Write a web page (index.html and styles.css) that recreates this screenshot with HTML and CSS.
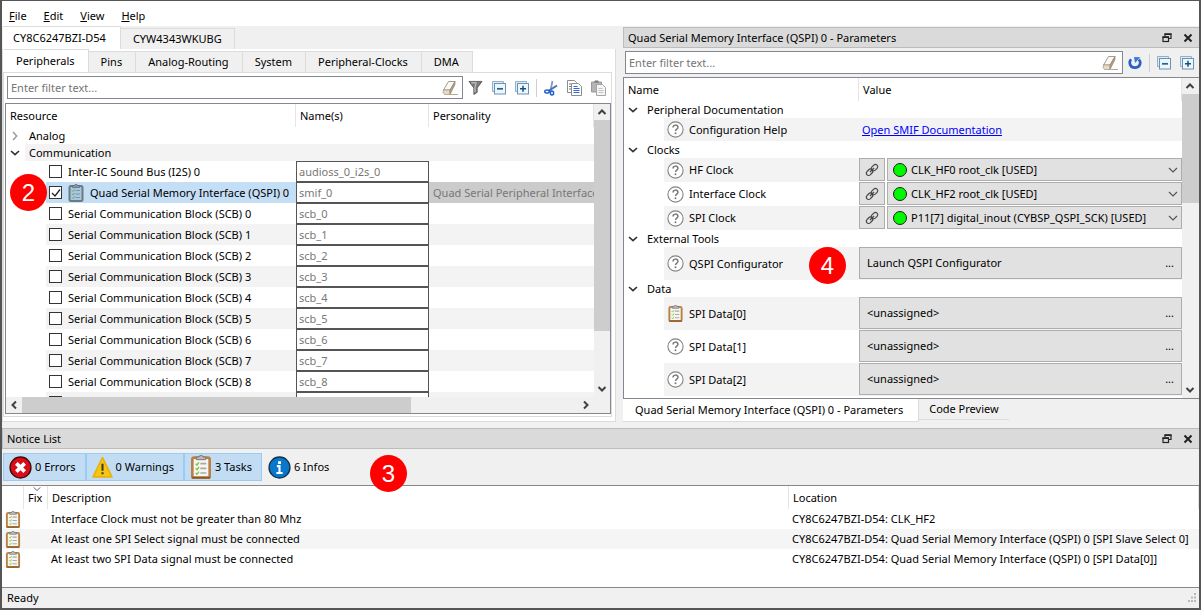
FILE: index.html
```html
<!DOCTYPE html>
<html lang="en">
<head>
<meta charset="utf-8">
<title>Device Configurator</title>
<link rel="stylesheet" href="styles.css">
</head>
<body>
<svg class="defs" width="0" height="0" aria-hidden="true">
  <symbol id="clip" viewBox="0 0 16 18">
    <rect x="1.5" y="2" width="13" height="15" rx="1.5" fill="#f7f5ef" stroke="#b98045" stroke-width="2"/>
    <path d="M1 17h14" stroke="#8a5526" stroke-width="1.2"/>
    <path d="M4.5 3.5V1.5h2L7 .5h2l.5 1h2v2z" fill="#b9bbbd" stroke="#76726c" stroke-width=".7"/>
    <path d="M7.5 6.5h4.5M7.5 10h4.5M7.5 13.5h4.5" stroke="#a9a9a9" stroke-width="1.2"/>
    <path d="M4 6.5l1 1 1.5-2M4 10l1 1 1.5-2M4 13.5l1 1 1.5-2" fill="none" stroke="#7cc344" stroke-width="1"/>
  </symbol>
  <symbol id="clip-sel" viewBox="0 0 16 18">
    <rect x="1.5" y="2" width="13" height="15" rx="1.5" fill="#a9c6da" stroke="#6c7a84" stroke-width="2"/>
    <path d="M4.5 3.5V1.5h2L7 .5h2l.5 1h2v2z" fill="#8496a3" stroke="#5c6a74" stroke-width=".7"/>
    <path d="M7.5 6.5h4.5M7.5 10h4.5M7.5 13.5h4.5" stroke="#7898ae" stroke-width="1.2"/>
    <path d="M4 6.5l1 1 1.5-2M4 10l1 1 1.5-2M4 13.5l1 1 1.5-2" fill="none" stroke="#5fa888" stroke-width="1"/>
  </symbol>
  <symbol id="help" viewBox="0 0 17 17">
    <circle cx="8.5" cy="8.5" r="7.6" fill="#fff" stroke="#858585" stroke-width="1.1"/>
    <path d="M6 6.6c.1-3.3 5-3.2 5-.3 0 1.800-2.500 1.700-2.500 3.700" fill="none" stroke="#7a7a7a" stroke-width="1.500"/>
    <circle cx="8.5" cy="12.3" r="1" fill="#7a7a7a"/>
  </symbol>
  <symbol id="down" viewBox="0 0 10 10"><path d="M1 3l4 3.700L9 3" fill="none" stroke="#333" stroke-width="1.700"/></symbol>
  <symbol id="thin-down" viewBox="0 0 10 10"><path d="M1 3l4 4 4-4" fill="none" stroke="#555" stroke-width="1.200"/></symbol>
  <symbol id="right" viewBox="0 0 10 10"><path d="M3 1l3.700 4L3 9" fill="none" stroke="#9a9a9a" stroke-width="1.500"/></symbol>
  <symbol id="sb-up" viewBox="0 0 10 10"><path d="M1.500 7L5 3.500 8.500 7" fill="none" stroke="#404040" stroke-width="2"/></symbol>
  <symbol id="sb-down" viewBox="0 0 10 10"><path d="M1.500 3L5 6.500 8.500 3" fill="none" stroke="#404040" stroke-width="2"/></symbol>
  <symbol id="sb-left" viewBox="0 0 10 10"><path d="M7 1.500L3.500 5 7 8.500" fill="none" stroke="#404040" stroke-width="2"/></symbol>
  <symbol id="sb-right" viewBox="0 0 10 10"><path d="M3 1.500L6.500 5 3 8.500" fill="none" stroke="#404040" stroke-width="2"/></symbol>
  <symbol id="eraser" viewBox="0 0 16 16">
    <path d="M6.500 1.500h6.500L8 10H1.500z" fill="#fbf9f5" stroke="#9a8f80" stroke-width=".9"/>
    <path d="M1.500 10H8v4.500H2.500L1 12.500z" fill="#e6dacb" stroke="#a39480" stroke-width=".7"/>
    <path d="M13 1.500v3L8 14.500V10z" fill="#b09d86" stroke="#998871" stroke-width=".7"/>
    <path d="M8.500 14.500H16" stroke="#b8a890"/>
  </symbol>
  <symbol id="funnel" viewBox="0 0 16 16">
    <path d="M1 1.500h14L9.800 8.500v4.700L6.200 15.500v-7z" fill="#7b7b7b" stroke="#4c4c4c" stroke-width=".8"/>
    <path d="M3.500 3h5L7.500 8v5" fill="none" stroke="#b7b7b7" stroke-width="1.500"/>
  </symbol>
  <symbol id="minus" viewBox="0 0 14 14">
    <path d="M.5 10.500V.5h11v2h-9v8z" fill="#dcebf6" stroke="#86a9c6" stroke-width=".9"/>
    <rect x="2.500" y="2.500" width="11" height="10.500" fill="#eef6fb" stroke="#6c93b4"/>
    <path d="M5 7.800h6" stroke="#1f6595" stroke-width="1.700"/>
  </symbol>
  <symbol id="plus" viewBox="0 0 14 14">
    <path d="M.5 10.500V.5h11v2h-9v8z" fill="#dcebf6" stroke="#86a9c6" stroke-width=".9"/>
    <rect x="2.500" y="2.500" width="11" height="10.500" fill="#eef6fb" stroke="#6c93b4"/>
    <path d="M5 7.800h6M8 4.800v6" stroke="#0c5488" stroke-width="1.500"/>
  </symbol>
  <symbol id="cut" viewBox="0 0 14 16">
    <path d="M8.500 1L6.500 10.500" stroke="#7f9ac2" stroke-width="1.800"/>
    <path d="M13 5.500L4.500 11" stroke="#4a6ca8" stroke-width="1.800"/>
    <ellipse cx="3" cy="11.500" rx="2.300" ry="1.600" fill="none" stroke="#1f5fc9" stroke-width="1.500"/>
    <ellipse cx="8" cy="13" rx="1.600" ry="2" fill="none" stroke="#1f5fc9" stroke-width="1.500"/>
  </symbol>
  <symbol id="copy" viewBox="0 0 15 16">
    <path d="M.5.500h7l2 2v10h-9z" fill="#fff" stroke="#8d8d8d"/>
    <path d="M2 4h2M2 6.500h2M2 9h2" stroke="#777"/>
    <path d="M4.500 3.500h7l3 3v9h-10z" fill="#fff" stroke="#8d8d8d"/>
    <path d="M6.500 6.500h4M6.500 8.500h6M6.500 10.500h6M6.500 12.500h6" stroke="#2f66dc" stroke-width="1.200"/>
  </symbol>
  <symbol id="paste" viewBox="0 0 15 16">
    <path d="M.5 2h10v10H.5z" fill="#b4b4b4" stroke="#9a9a9a"/>
    <path d="M3 2.500L4 .5h3l1 2z" fill="#777"/>
    <path d="M5.500 4.500h6l3 3v8h-9z" fill="#f5f5f5" stroke="#a5a5a5"/>
    <path d="M7.500 8.500h4M7.500 10.500h5M7.500 12.500h5" stroke="#c4c4c4"/>
  </symbol>
  <symbol id="reset" viewBox="0 0 14 14">
    <path d="M3 3.200C.5 6.500 2 11.700 7 11.700s6.500-5 4-8.200" fill="none" stroke="#2a5fc6" stroke-width="2.700"/>
    <path d="M6 1l6.500.2L7 7z" fill="#3f78d8"/>
  </symbol>
  <symbol id="link" viewBox="0 0 14 14">
    <g fill="none" stroke="#444" stroke-width="1.200">
      <rect x="6" y="2.300" width="7" height="4.600" rx="2.200" transform="rotate(-45 9.500 4.600)"/>
      <rect x="1" y="7" width="7" height="4.600" rx="2.200" transform="rotate(-45 4.500 9.300)"/>
      <path d="M5 9l4-4"/>
    </g>
  </symbol>
  <symbol id="float" viewBox="0 0 10 10">
    <path d="M3 3V1h6v4.500H7" fill="none" stroke="#222" stroke-width="1.200"/><path d="M2.500 1.200h7" stroke="#222" stroke-width="1.600"/>
    <rect x="1" y="4" width="5.500" height="4.500" fill="none" stroke="#222" stroke-width="1.200"/><path d="M.5 4.200h6.500" stroke="#222" stroke-width="1.600"/>
  </symbol>
  <symbol id="close" viewBox="0 0 10 10"><path d="M1.500 1.500l7 7M8.500 1.500l-7 7" stroke="#222" stroke-width="2"/></symbol>
  <symbol id="error" viewBox="0 0 22 22">
    <circle cx="11" cy="11" r="10" fill="#db0c16" stroke="#3c0d10" stroke-width="1.300"/>
    <path d="M7 7l8 8M15 7l-8 8" stroke="#fff" stroke-width="3.600"/>
  </symbol>
  <symbol id="warn" viewBox="0 0 20 21">
    <path d="M10 1.500L19 20H1z" fill="#f8c512" stroke="#e8b20a" stroke-width="1.600" stroke-linejoin="round"/>
    <path d="M10 7.500v6.500M10 15.500v2" stroke="#3b3b2a" stroke-width="2"/>
  </symbol>
  <symbol id="info" viewBox="0 0 22 22">
    <circle cx="11" cy="11" r="10" fill="#0878cc" stroke="#15324c" stroke-width="1.300"/>
    <path d="M11 5v2.600" stroke="#fff" stroke-width="2.800"/>
    <path d="M8.500 9.700H11v6M8 16.200h6" fill="none" stroke="#fff" stroke-width="2"/>
  </symbol>
  <symbol id="check" viewBox="0 0 10 10"><path d="M1 5l3 3 5-6.500" fill="none" stroke="#222" stroke-width="1.300"/></symbol>
</svg>

<div class="window">
  <nav class="menubar">
    <button><u>F</u>ile</button><button><u>E</u>dit</button><button><u>V</u>iew</button><button><u>H</u>elp</button>
  </nav>

  <main class="work">
    <section class="device">
      <div class="tabs device-tabs">
        <button class="tab active">CY8C6247BZI-D54</button><button class="tab">CYW4343WKUBG</button>
      </div>
      <div class="device-pane">
        <div class="tabs inner-tabs">
          <button class="tab active">Peripherals</button><button class="tab">Pins</button><button class="tab">Analog-Routing</button><button class="tab">System</button><button class="tab">Peripheral-Clocks</button><button class="tab">DMA</button>
        </div>
        <div class="inner-pane">
          <div class="filter">
            <label class="filter-box"><input type="text" aria-label="Filter resources" placeholder="Enter filter text..."><svg width="16" height="16"><use href="#eraser"/></svg></label>
            <div class="tools">
              <button aria-label="Filter"><svg width="15" height="15"><use href="#funnel"/></svg></button>
              <button aria-label="Collapse all"><svg width="14" height="14"><use href="#minus"/></svg></button>
              <button aria-label="Expand all"><svg width="14" height="14"><use href="#plus"/></svg></button>
              <span class="sep"></span>
              <button aria-label="Cut"><svg width="14" height="16"><use href="#cut"/></svg></button>
              <button aria-label="Copy"><svg width="15" height="16"><use href="#copy"/></svg></button>
              <button aria-label="Paste"><svg width="15" height="16"><use href="#paste"/></svg></button>
            </div>
          </div>
          <div class="frame">
            <div class="view">
              <table class="resources">
                <colgroup><col class="c-resource"><col class="c-name"><col></colgroup>
                <thead><tr><th>Resource</th><th>Name(s)</th><th>Personality</th></tr></thead>
                <tbody>
                  <tr class="group"><td colspan="3"><div class="branch"><svg width="10" height="10"><use href="#right"/></svg><span>Analog</span></div></td></tr>
                  <tr class="group striped"><td colspan="3"><div class="branch"><svg width="10" height="10"><use href="#down"/></svg><span>Communication</span></div></td></tr>
                  <tr><td><label class="item"><input type="checkbox"><span>Inter-IC Sound Bus (I2S) 0</span></label></td><td><input class="name" aria-label="Name" value="audioss_0_i2s_0"></td><td></td></tr>
                  <tr class="selected"><td><label class="item"><input type="checkbox" checked><svg class="tick" width="10" height="10"><use href="#check"/></svg><svg class="task" width="16" height="18"><use href="#clip-sel"/></svg><span>Quad Serial Memory Interface (QSPI) 0</span></label><span class="mark mark-2">2</span></td><td><input class="name" aria-label="Name" value="smif_0"></td><td>Quad Serial Peripheral Interface</td></tr>
                  <tr><td><label class="item"><input type="checkbox"><span>Serial Communication Block (SCB) 0</span></label></td><td><input class="name" aria-label="Name" value="scb_0"></td><td></td></tr>
                  <tr class="striped"><td><label class="item"><input type="checkbox"><span>Serial Communication Block (SCB) 1</span></label></td><td><input class="name" aria-label="Name" value="scb_1"></td><td></td></tr>
                  <tr><td><label class="item"><input type="checkbox"><span>Serial Communication Block (SCB) 2</span></label></td><td><input class="name" aria-label="Name" value="scb_2"></td><td></td></tr>
                  <tr class="striped"><td><label class="item"><input type="checkbox"><span>Serial Communication Block (SCB) 3</span></label></td><td><input class="name" aria-label="Name" value="scb_3"></td><td></td></tr>
                  <tr><td><label class="item"><input type="checkbox"><span>Serial Communication Block (SCB) 4</span></label></td><td><input class="name" aria-label="Name" value="scb_4"></td><td></td></tr>
                  <tr class="striped"><td><label class="item"><input type="checkbox"><span>Serial Communication Block (SCB) 5</span></label></td><td><input class="name" aria-label="Name" value="scb_5"></td><td></td></tr>
                  <tr><td><label class="item"><input type="checkbox"><span>Serial Communication Block (SCB) 6</span></label></td><td><input class="name" aria-label="Name" value="scb_6"></td><td></td></tr>
                  <tr class="striped"><td><label class="item"><input type="checkbox"><span>Serial Communication Block (SCB) 7</span></label></td><td><input class="name" aria-label="Name" value="scb_7"></td><td></td></tr>
                  <tr><td><label class="item"><input type="checkbox"><span>Serial Communication Block (SCB) 8</span></label></td><td><input class="name" aria-label="Name" value="scb_8"></td><td></td></tr>
                  <tr class="striped"><td><label class="item"><input type="checkbox" aria-label="Next block"></label></td><td><input class="name" aria-label="Name"></td><td></td></tr>
                </tbody>
              </table>
            </div>
            <div class="vbar"><button aria-label="Scroll up"><svg width="10" height="10"><use href="#sb-up"/></svg></button><div class="track"><div class="thumb thumb-resources"></div></div><button aria-label="Scroll down"><svg width="10" height="10"><use href="#sb-down"/></svg></button></div>
            <div class="hbar"><button aria-label="Scroll left"><svg width="10" height="10"><use href="#sb-left"/></svg></button><div class="track"><div class="thumb"></div></div><button aria-label="Scroll right"><svg width="10" height="10"><use href="#sb-right"/></svg></button></div>
          </div>
        </div>
      </div>
    </section>

    <section class="params">
      <header class="dock-title"><span>Quad Serial Memory Interface (QSPI) 0 - Parameters</span><button aria-label="Float"><svg width="10" height="10"><use href="#float"/></svg></button><button aria-label="Close"><svg width="10" height="10"><use href="#close"/></svg></button></header>
      <div class="filter">
        <label class="filter-box"><input type="text" aria-label="Filter parameters" placeholder="Enter filter text..."><svg width="16" height="16"><use href="#eraser"/></svg></label>
        <div class="tools">
          <button aria-label="Reset"><svg width="14" height="14"><use href="#reset"/></svg></button>
          <span class="sep"></span>
          <button aria-label="Collapse all"><svg width="14" height="14"><use href="#minus"/></svg></button>
          <button aria-label="Expand all"><svg width="14" height="14"><use href="#plus"/></svg></button>
        </div>
      </div>
      <div class="frame">
        <div class="view">
          <table class="parameters">
            <colgroup><col class="c-param"><col></colgroup>
            <thead><tr><th>Name</th><th>Value</th></tr></thead>
            <tbody>
              <tr class="group"><td colspan="2"><div class="branch"><svg width="10" height="10"><use href="#down"/></svg><span>Peripheral Documentation</span></div></td></tr>
              <tr class="striped doc"><td><div class="param"><svg width="17" height="17"><use href="#help"/></svg>Configuration Help</div></td><td><a href="#smif">Open SMIF Documentation</a></td></tr>
              <tr class="group"><td colspan="2"><div class="branch"><svg width="10" height="10"><use href="#down"/></svg><span>Clocks</span></div></td></tr>
              <tr class="striped"><td><div class="param"><svg width="17" height="17"><use href="#help"/></svg>HF Clock</div></td><td><div class="pick"><button aria-label="Go to HF clock"><svg width="14" height="14"><use href="#link"/></svg></button><div class="combo"><i class="dot"></i><select aria-label="HF Clock"><option>CLK_HF0 root_clk [USED]</option></select><svg width="10" height="10"><use href="#thin-down"/></svg></div></div></td></tr>
              <tr><td><div class="param"><svg width="17" height="17"><use href="#help"/></svg>Interface Clock</div></td><td><div class="pick"><button aria-label="Go to interface clock"><svg width="14" height="14"><use href="#link"/></svg></button><div class="combo"><i class="dot"></i><select aria-label="Interface Clock"><option>CLK_HF2 root_clk [USED]</option></select><svg width="10" height="10"><use href="#thin-down"/></svg></div></div></td></tr>
              <tr class="striped"><td><div class="param"><svg width="17" height="17"><use href="#help"/></svg>SPI Clock</div></td><td><div class="pick"><button aria-label="Go to SPI clock"><svg width="14" height="14"><use href="#link"/></svg></button><div class="combo"><i class="dot"></i><select aria-label="SPI Clock"><option>P11[7] digital_inout (CYBSP_QSPI_SCK) [USED]</option></select><svg width="10" height="10"><use href="#thin-down"/></svg></div></div></td></tr>
              <tr class="group"><td colspan="2"><div class="branch"><svg width="10" height="10"><use href="#down"/></svg><span>External Tools</span></div></td></tr>
              <tr class="striped tall"><td><div class="param"><svg width="17" height="17"><use href="#help"/></svg>QSPI Configurator</div><span class="mark mark-4">4</span></td><td><button class="open"><span>Launch QSPI Configurator</span><span>...</span></button></td></tr>
              <tr class="group"><td colspan="2"><div class="branch"><svg width="10" height="10"><use href="#down"/></svg><span>Data</span></div></td></tr>
              <tr class="striped tall"><td><div class="param"><svg width="17" height="17"><use href="#clip"/></svg>SPI Data[0]</div></td><td><button class="open"><span>&lt;unassigned&gt;</span><span>...</span></button></td></tr>
              <tr class="tall"><td><div class="param"><svg width="17" height="17"><use href="#help"/></svg>SPI Data[1]</div></td><td><button class="open"><span>&lt;unassigned&gt;</span><span>...</span></button></td></tr>
              <tr class="striped tall"><td><div class="param"><svg width="17" height="17"><use href="#help"/></svg>SPI Data[2]</div></td><td><button class="open"><span>&lt;unassigned&gt;</span><span>...</span></button></td></tr>
            </tbody>
          </table>
        </div>
        <div class="vbar"><button aria-label="Scroll up"><svg width="10" height="10"><use href="#sb-up"/></svg></button><div class="track"><div class="thumb thumb-params"></div></div><button aria-label="Scroll down"><svg width="10" height="10"><use href="#sb-down"/></svg></button></div>
      </div>
      <div class="bottom-tabs"><button class="active">Quad Serial Memory Interface (QSPI) 0 - Parameters</button><button>Code Preview</button></div>
    </section>
  </main>

  <section class="notices">
    <header class="dock-title"><span>Notice List</span><button aria-label="Float"><svg width="10" height="10"><use href="#float"/></svg></button><button aria-label="Close"><svg width="10" height="10"><use href="#close"/></svg></button></header>
    <div class="levels">
      <button class="on"><svg width="23" height="23"><use href="#error"/></svg>0 Errors</button>
      <button class="on"><svg width="21" height="22"><use href="#warn"/></svg>0 Warnings</button>
      <button class="on"><svg width="22" height="24"><use href="#clip"/></svg>3 Tasks</button>
      <button><svg width="23" height="23"><use href="#info"/></svg>6 Infos</button>
      <span class="mark mark-3">3</span>
    </div>
    <div class="notice-view">
      <table class="notice-table">
        <colgroup><col class="c-icon"><col class="c-fix"><col class="c-desc"><col></colgroup>
        <thead><tr><th></th><th class="sorted">Fix<svg width="8" height="8"><use href="#thin-down"/></svg></th><th>Description</th><th>Location</th></tr></thead>
        <tbody>
          <tr><td><svg width="16" height="17"><use href="#clip"/></svg></td><td></td><td>Interface Clock must not be greater than 80 Mhz</td><td>CY8C6247BZI-D54: CLK_HF2</td></tr>
          <tr class="striped"><td><svg width="16" height="17"><use href="#clip"/></svg></td><td></td><td>At least one SPI Select signal must be connected</td><td>CY8C6247BZI-D54: Quad Serial Memory Interface (QSPI) 0 [SPI Slave Select 0]</td></tr>
          <tr><td><svg width="16" height="17"><use href="#clip"/></svg></td><td></td><td>At least two SPI Data signal must be connected</td><td>CY8C6247BZI-D54: Quad Serial Memory Interface (QSPI) 0 [SPI Data[0]]</td></tr>
        </tbody>
      </table>
    </div>
  </section>

  <footer class="status"><span>Ready</span><svg width="10" height="10" viewBox="0 0 10 10"><path d="M7 0h2v2H7zM4 3.500h2v2H4zM7 3.500h2v2H7zM1 7h2v2H1zM4 7h2v2H4zM7 7h2v2H7z" fill="#b8b8b8"/></svg></footer>
</div>
</body>
</html>
```
FILE: styles.css
```css
* { box-sizing: border-box; }
body { margin: 0; font-family: "Noto Sans", "Open Sans", sans-serif; font-size: 11px; line-height: 16px; color: #000; }
button, input, select { font: inherit; color: inherit; margin: 0; padding: 0; border: 0; background: none; border-radius: 0; }
svg { display: block; flex: none; }
.defs { position: absolute; }

.window { display: flex; flex-direction: column; height: 100vh; min-height: 500px; background: #f0f0f0; border: solid #555; border-width: 1px 2px 2px; overflow: hidden; }
.menubar { display: flex; gap: 17px; height: 25px; padding: 6px 7px 0; background: #fff; flex: none; }
.menubar button { height: 18px; }

.work { display: grid; grid-template-columns: 614fr 576fr; gap: 7px; flex: 1; min-height: 0; }
.device, .params { display: flex; flex-direction: column; min-width: 0; min-height: 0; }

.tabs { display: flex; align-items: flex-end; flex: none; }
.tab { height: 21px; background: #f0f0f0; border: 1px solid #dcdcdc; border-left: 0; border-bottom: 0; white-space: nowrap; }
.tab.active { background: #fff; height: 23px; }
.device-tabs { height: 23px; padding-left: 1px; }
.device-tabs .tab { padding: 0 12px; }
.device-tabs .active { padding: 0 14px 0 10px; }
.device-pane { display: flex; flex-direction: column; flex: 1; min-height: 0; background: #fff; border: 1px solid #dcdcdc; border-top: 0; padding: 2px 3px 4px 0; margin-bottom: 6px; }
.inner-tabs { height: 21px; padding-left: 1px; }
.inner-tabs .tab { padding: 0 13px 0 12px; }
.inner-pane { display: flex; flex-direction: column; flex: 1; min-height: 0; border: 1px solid #dcdcdc; padding: 3px 0 2px 1px; }

.filter { display: flex; align-items: center; flex: none; }
.filter-box { display: flex; align-items: center; flex: 1; height: 23px; padding: 0 4px 0 3px; background: #fff; border: 1px solid #828790; }
.filter-box input { flex: 1; min-width: 0; outline: 0; }
.filter-box input::placeholder { color: #757575; opacity: 1; }
.device .filter { padding: 0 5px 4px 2px; }
.tools { display: flex; align-items: center; gap: 9px; padding-left: 5px; }
.sep { width: 1px; height: 18px; margin: 0 -2px; background: #cfcfcf; }

.frame { display: grid; grid-template-columns: minmax(0, 1fr) 16px; grid-template-rows: minmax(0, 1fr) auto; flex: 1; min-height: 0; background: #fff; border: 1px solid #828790; }
.view { overflow: hidden; min-height: 0; }
table { width: 100%; border-collapse: separate; border-spacing: 0; table-layout: fixed; }
th { height: 23px; padding: 0 4px; text-align: left; font-weight: 400; border-right: 1px solid #e5e5e5; }
td { padding: 0; white-space: nowrap; }
.branch { display: flex; align-items: center; height: 17px; padding-left: 4px; gap: 5px; }
.branch span { flex: 1; padding-left: 4px; line-height: 17px; }
.striped .branch span { background: #f3f3f3; }

.c-resource { width: 290px; }
.c-name { width: 133px; }
.resources tbody tr:not(.group) td { height: 21px; position: relative; }
.resources td:first-child { padding-left: 40px; }
.resources .group td:first-child, .parameters .group td:first-child { padding-left: 0; }
.resources td:nth-child(3) { padding-left: 4px; overflow: hidden; color: #777; }
.item { display: flex; align-items: center; height: 21px; padding-left: 3px; }
.item input { appearance: none; width: 13px; height: 13px; margin-right: 6px; border: 1px solid #333; background: #fff; flex: none; }
.item .task { margin-right: 6px; }
.tick { position: absolute; left: 45px; top: 6px; }
.striped .item, .resources .striped td:nth-child(3) { background: #f3f3f3; }
.selected .item { background: #c4dff5; }
.resources .selected td:nth-child(3) { background: #cbcbcb; }
.name { display: block; width: 100%; height: 21px; padding: 0 2px; color: #777; background: #fff; border: 1px solid #555; outline: 0; }

.vbar { display: flex; flex-direction: column; background: #f0f0f0; }
.vbar button, .hbar button { display: grid; place-items: center; width: 16px; height: 16px; flex: none; }
.track { flex: 1; min-width: 0; min-height: 0; }
.thumb { background: #cdcdcd; height: 100%; width: 70%; }
.vbar .thumb { width: 100%; }
.vbar .thumb-resources { height: 81%; }
.vbar .thumb-params { height: 38%; }
.hbar { grid-column: 1; display: flex; height: 16px; background: #f0f0f0; }
.device .frame { background: linear-gradient(#f0f0f0, #f0f0f0) right bottom / 16px 16px no-repeat, #fff; }

.dock-title { display: flex; align-items: center; gap: 11px; flex: none; height: 21px; padding: 0 6px 0 4px; background: #dadada; border: 1px solid #bcbcbc; border-right: 0; }
.dock-title span { flex: 1; }
.params .filter { padding: 3px 5px 3px 2px; }
.params .dock-title { margin-top: 1px; }
.params .frame { grid-template-columns: minmax(0, 1fr) 17px; border-right: 0; }
.c-param { width: 235px; }
.parameters td:first-child { padding-left: 40px; position: relative; }
.param { display: flex; align-items: center; height: 24px; gap: 5px; padding-left: 3px; }
.doc .param { height: 23px; }
.tall .param { height: 33px; }
.parameters .striped .param { background: #f3f3f3; }
.parameters .striped td:nth-child(2) { background: #f3f3f3; }
.parameters a { color: #0000ff; padding-left: 3px; }
.pick { display: grid; grid-template-columns: 26px minmax(0, 1fr); gap: 2px; height: 24px; padding-bottom: 1px; background: #fff; }
.pick button, .combo, .open { background: #e1e1e1; border: 1px solid #adadad; }
.pick button { display: grid; place-items: center; }
.combo { display: flex; align-items: center; padding: 0 3px 0 5px; gap: 4px; }
.combo select { appearance: none; flex: 1; min-width: 0; height: 20px; outline: 0; }
.dot { width: 14px; height: 14px; border-radius: 50%; background: #00f800; border: 1px solid #222; flex: none; }
.open { display: flex; justify-content: space-between; align-items: center; width: 100%; height: 32px; padding: 0 7px; }
.tall td:nth-child(2) { padding-bottom: 1px; }

.bottom-tabs { display: flex; align-items: flex-start; flex: none; padding-bottom: 6px; }
.bottom-tabs button { height: 21px; padding: 0 10px; white-space: nowrap; border-bottom: 1px solid #dcdcdc; }
.bottom-tabs .active { height: 23px; padding: 0 15px 0 12px; background: #fff; border-right: 1px solid #dcdcdc; }

.notices { flex: none; }
.levels { display: flex; position: relative; height: 36px; padding: 4px 1px; }
.levels button { display: flex; align-items: center; gap: 3px; padding: 0 9px 0 5px; border: 1px solid transparent; }
.levels .on { background: #c2ddf3; border-color: #99ccf5; }
.notice-view { height: 103px; background: #fff; border: solid #828790; border-width: 1px 0; overflow: hidden; }
.c-icon { width: 22px; }
.c-fix { width: 24px; }
.c-desc { width: 741px; }
.notice-table td { height: 20px; padding-left: 3px; }
.notice-table .striped td { background: #f5f5f5; }
.sorted { position: relative; }
.sorted svg { position: absolute; left: 9px; top: -1px; }
.status { display: flex; align-items: center; justify-content: space-between; height: 20px; padding: 0 2px 0 5px; flex: none; }

.mark { position: absolute; z-index: 2; width: 37px; height: 37px; border-radius: 50%; background: #f00; color: #fff; font: 24px/37px "Liberation Sans", sans-serif; text-align: center; }
.mark-2 { left: 4px; top: -8px; }
.mark-4 { left: 185px; top: 0; }
.mark-3 { left: 368px; top: 6px; }
```
